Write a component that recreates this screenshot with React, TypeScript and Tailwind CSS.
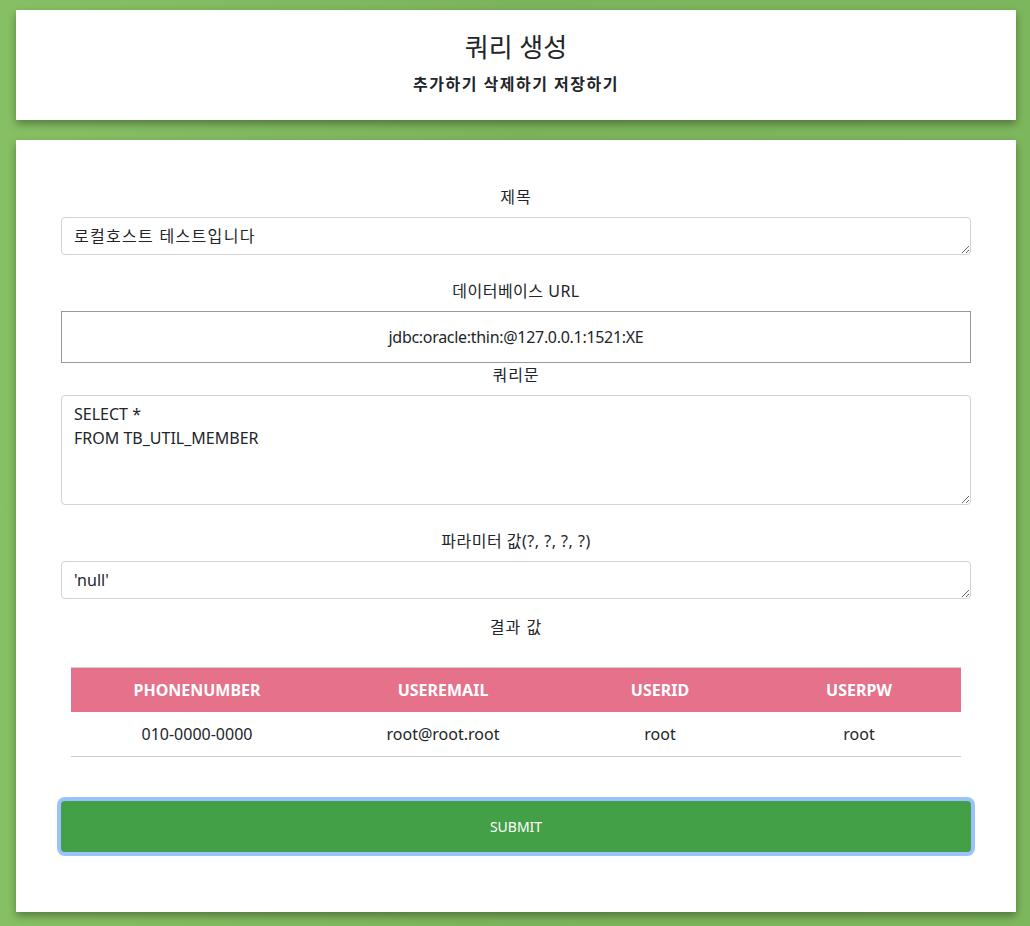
import React from "react";

const font = { fontFamily: "'Noto Sans', 'Noto Sans CJK KR', sans-serif" };

export default function App() {
  return (
    <div
      className="min-h-[926px] w-full bg-[linear-gradient(90deg,#86c064_0%,#7cb45c_50%,#7db75d_100%)] pt-[10px] pb-[14px] pl-[16px] pr-[14px] text-[#212529]"
      style={font}
    >
      <div className="bg-white shadow-[0_4px_8px_rgba(0,0,0,0.35)] h-[110px] flex flex-col items-center pt-[18px]">
        <h1 className="text-[26px] leading-[38px] font-normal">쿼리 생성</h1>
        <div className="text-[16px] leading-[24px] font-bold mt-[6px] tracking-[1.5px]">추가하기 삭제하기 저장하기</div>
      </div>

      <div className="mt-[20px] bg-white shadow-[0_4px_8px_rgba(0,0,0,0.35)] h-[772px] px-[45px] pt-[45px]">
        <div className="text-center text-[16px] leading-[24px] tracking-[1px]">제목</div>
        <textarea
          rows={1}
          defaultValue="로컬호스트 테스트입니다"
          className="mt-[8px] block w-full border border-[#ced4da] rounded-[4px] px-3 py-1.5 text-[16px] leading-6 h-[38px] outline-none tracking-[1.3px]"
        />
        <div className="text-center text-[16px] leading-[24px] mt-[24px] tracking-[0.5px]">데이터베이스 URL</div>
        <input
          defaultValue="jdbc:oracle:thin:@127.0.0.1:1521:XE"
          className="mt-[8px] block w-full border border-[#999999] h-[52px] text-center text-[16px] outline-none tracking-[-0.3px]"
        />
        <div className="text-center text-[16px] leading-[24px] tracking-[1px]">쿼리문</div>
        <textarea
          rows={4}
          defaultValue={"SELECT *\nFROM TB_UTIL_MEMBER"}
          className="mt-[8px] block w-full border border-[#ced4da] rounded-[4px] px-3 py-1.5 text-[16px] leading-6 h-[110px] outline-none"
        />
        <div className="text-center text-[16px] leading-[24px] mt-[24px] tracking-[0.5px]">파라미터 값(?, ?, ?, ?)</div>
        <textarea
          rows={1}
          defaultValue="'null'"
          className="mt-[8px] block w-full border border-[#ced4da] rounded-[4px] px-3 py-1.5 text-[16px] leading-6 h-[38px] outline-none"
        />
        <div className="text-center text-[16px] leading-[24px] mt-[16px] tracking-[1px]">결과 값</div>

        <div className="px-[10px] mt-[28px]">
          <table className="w-full border-collapse text-[16px]">
            <thead>
              <tr className="bg-[#e5718b] text-white border-t border-[#d0d0d0]">
                <th className="w-[252px] h-[44px] font-bold">PHONENUMBER</th>
                <th className="w-[240px] font-bold">USEREMAIL</th>
                <th className="w-[194px] font-bold">USERID</th>
                <th className="font-bold">USERPW</th>
              </tr>
            </thead>
            <tbody>
              <tr className="border-b border-[#cccccc]">
                <td className="h-[45px] text-center">010-0000-0000</td>
                <td className="text-center">root@root.root</td>
                <td className="text-center">root</td>
                <td className="text-center">root</td>
              </tr>
            </tbody>
          </table>
        </div>

        <button className="mt-[44px] block w-full h-[51px] bg-[#43a047] text-white text-[14px] rounded-[4px] ring-4 ring-[#9ac2fd]">
          SUBMIT
        </button>
      </div>
    </div>
  );
}
